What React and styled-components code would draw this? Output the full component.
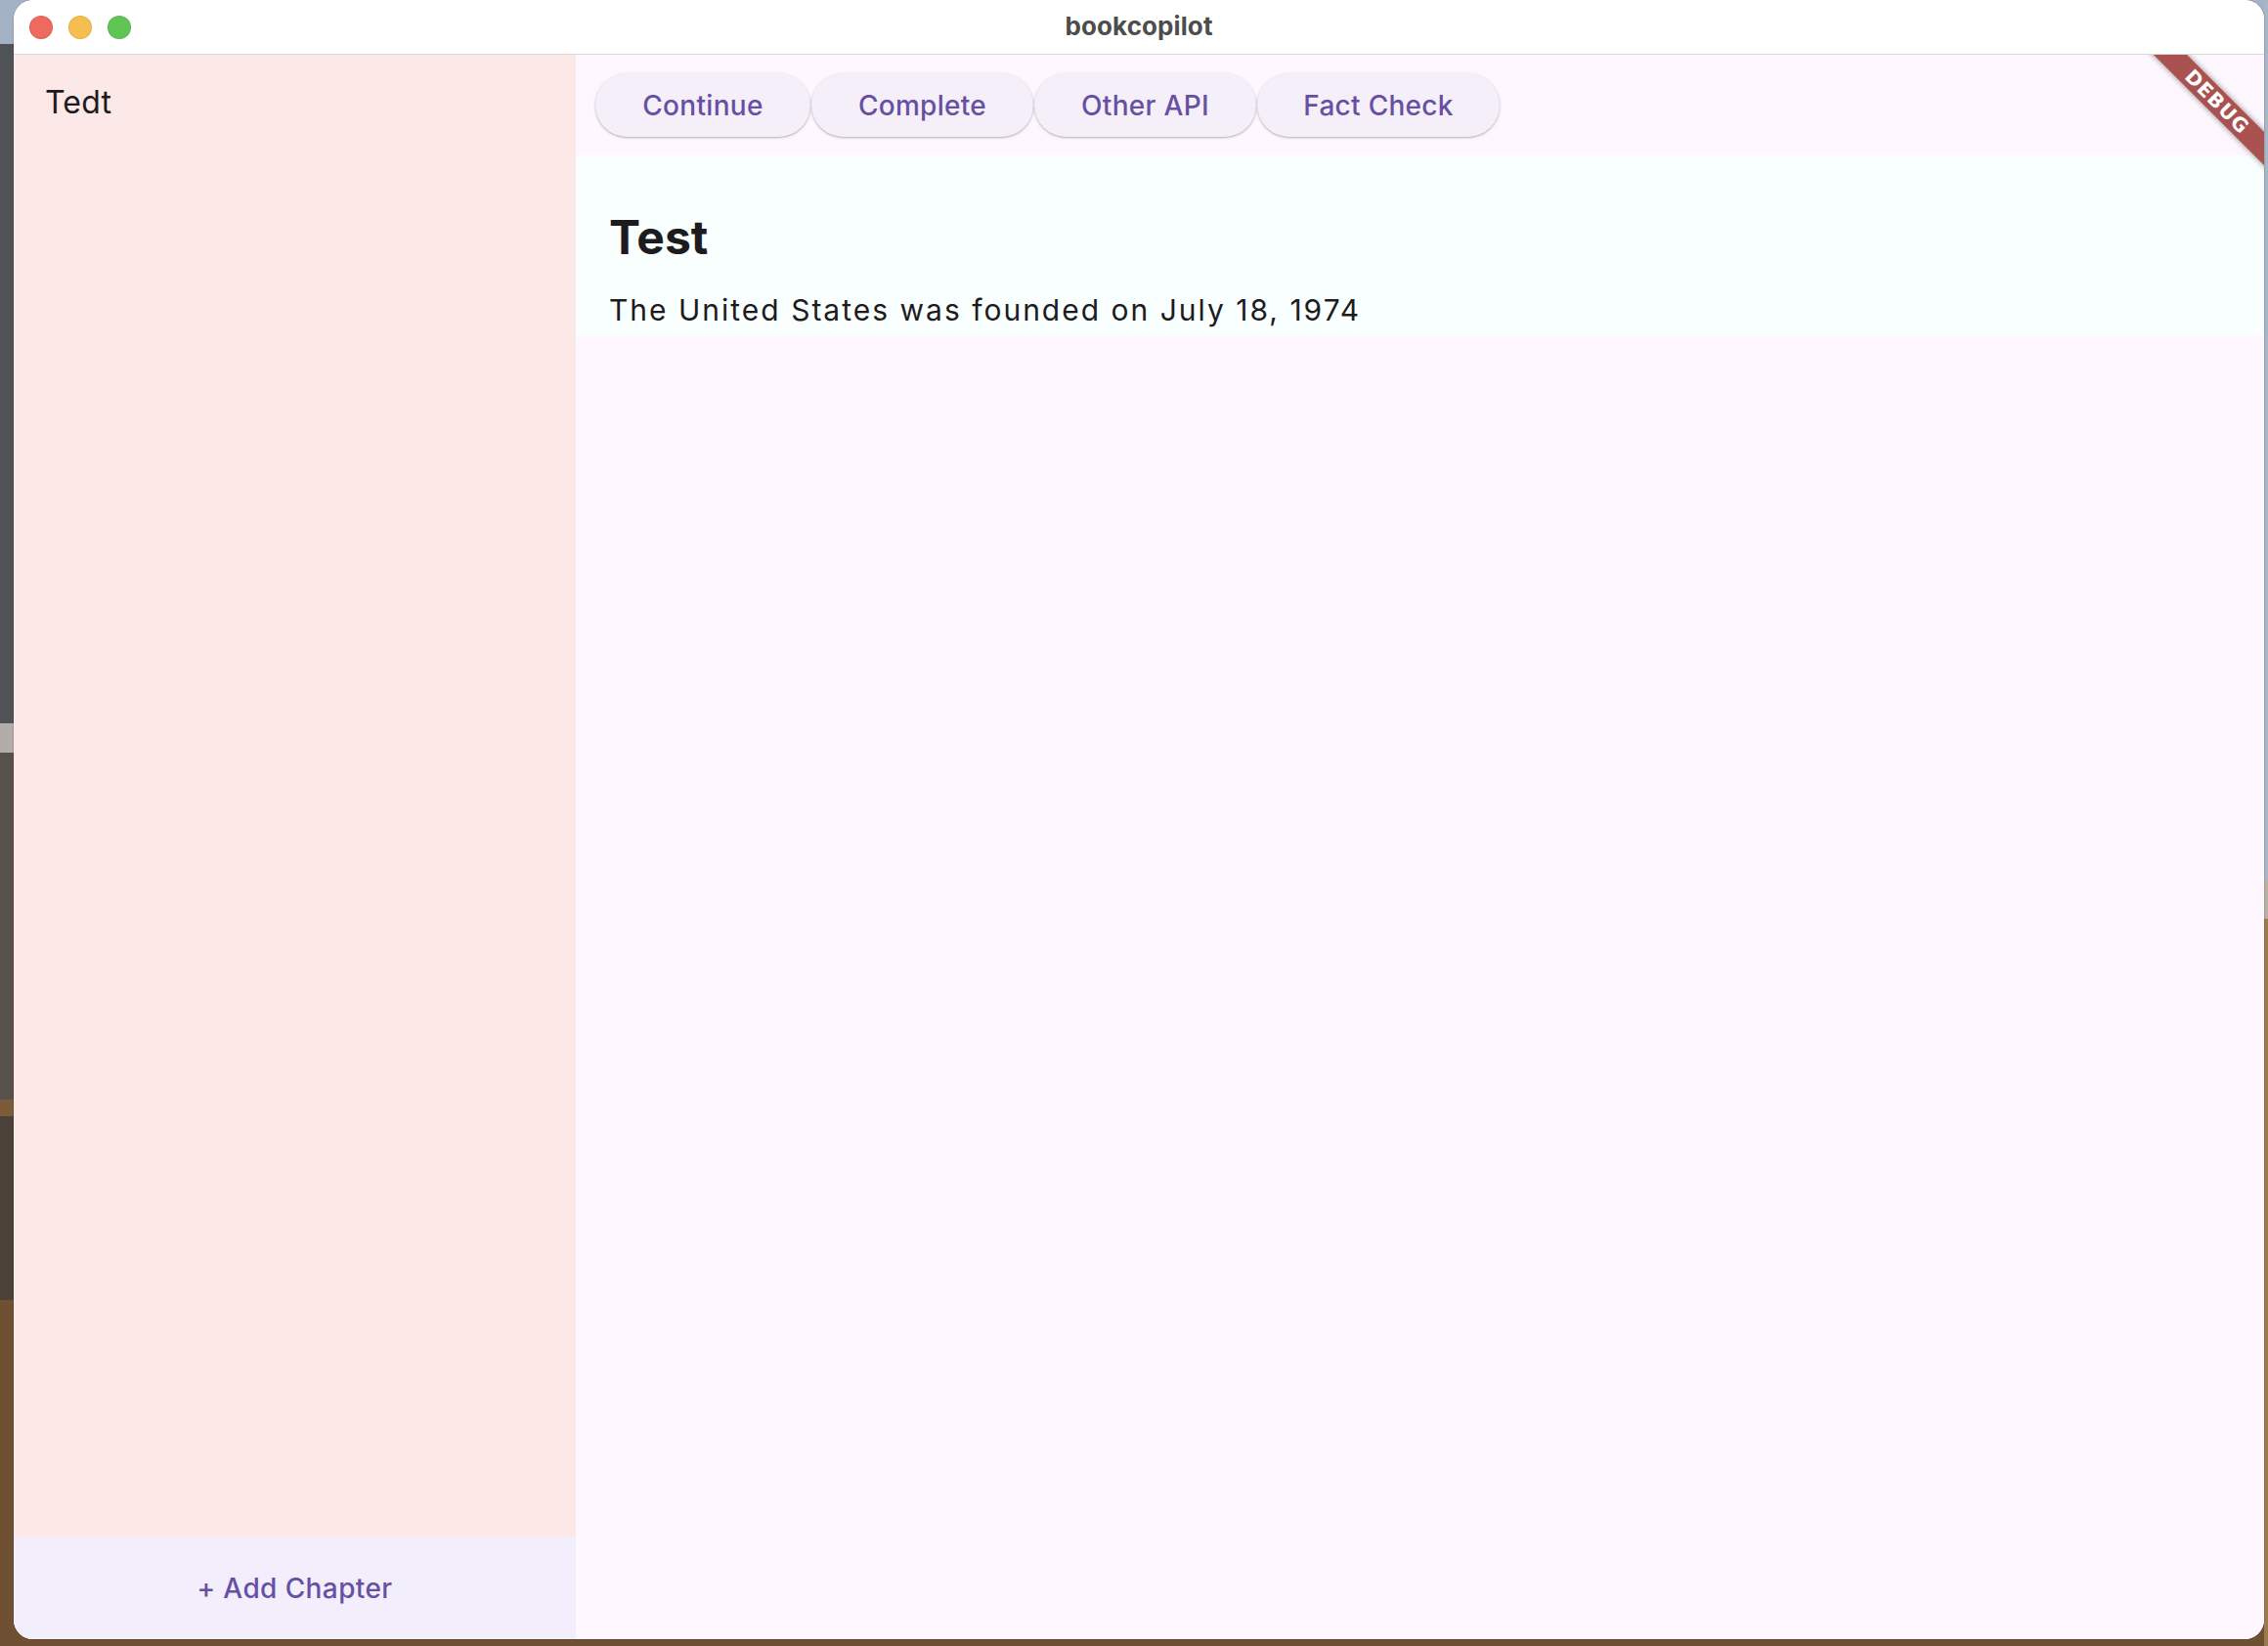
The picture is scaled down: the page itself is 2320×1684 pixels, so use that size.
import React from "react";
import styled, { createGlobalStyle } from "styled-components";

const GlobalStyle = createGlobalStyle`
  html, body {
    margin: 0;
    padding: 0;
  }
  body {
    font-family: Inter, "Noto Sans", "Liberation Sans", sans-serif;
    -webkit-font-smoothing: antialiased;
  }
  * { box-sizing: border-box; }
`;

const Desktop = styled.div`
  width: 2320px;
  height: 1684px;
  padding: 0 4px 7px 14px;
  background:
    linear-gradient(
        to bottom,
        #a9b6c8 0 900px,
        #b9b0a6 900px 940px,
        #9c7a50 940px 100%
      )
      right top / 4px 100% no-repeat,
    linear-gradient(
      to bottom,
      #a4b2c6 0 45px,
      #4f5356 45px 740px,
      #b2ada8 740px 770px,
      #57514c 770px 1125px,
      #7c5b3b 1125px 1142px,
      #4b4139 1142px 1330px,
      #6f5032 1330px 100%
    );
`;

const Window = styled.div`
  height: 100%;
  display: flex;
  flex-direction: column;
  border-radius: 20px;
  overflow: hidden;
  background: #ffffff;
  box-shadow: 0 0 0 1px rgba(0, 0, 0, 0.12);
`;

const TitleBar = styled.div`
  height: 56px;
  flex: none;
  display: grid;
  grid-template-columns: 1fr auto 1fr;
  align-items: center;
  background: #ffffff;
  border-bottom: 1px solid #ddd7d9;
`;

const Lights = styled.div`
  display: flex;
  gap: 16px;
  padding-left: 16px;
  padding-top: 1px;
`;

const Light = styled.span`
  width: 24px;
  height: 24px;
  border-radius: 50%;
  background: ${(p) => p.$color};
  box-shadow: inset 0 0 0 1px rgba(0, 0, 0, 0.08);
`;

const Title = styled.div`
  font-size: 26px;
  font-weight: 700;
  color: #4d4d4d;
  letter-spacing: 0.1px;
  margin-top: -3px;
`;

const Body = styled.div`
  flex: 1;
  min-height: 0;
  display: flex;
`;

const Sidebar = styled.aside`
  width: 575px;
  flex: none;
  display: flex;
  flex-direction: column;
  background: #fce8e6;
`;

const ChapterList = styled.div`
  flex: 1;
  padding: 25px 0 0 32px;
`;

const ChapterItem = styled.div`
  font-size: 32px;
  line-height: 48px;
  color: #1d1b20;
  letter-spacing: 0.2px;
`;

const AddBar = styled.div`
  height: 104px;
  flex: none;
  display: flex;
  align-items: center;
  justify-content: center;
  background: #f3eefc;
`;

const AddButton = styled.button`
  border: none;
  background: transparent;
  font-family: inherit;
  font-size: 28px;
  font-weight: 500;
  color: #6750a4;
  letter-spacing: 0.4px;
  padding: 0;
  margin-top: 0;
`;

const Main = styled.main`
  flex: 1;
  min-width: 0;
  position: relative;
  overflow: hidden;
  display: flex;
  flex-direction: column;
  background: #fef7ff;
`;

const Toolbar = styled.div`
  display: flex;
  gap: 1px;
  padding: 19px 20px;
`;

const ActionButton = styled.button`
  width: ${(p) => p.$w}px;
  height: 65px;
  border: none;
  border-radius: 33px;
  background: #f4eff8;
  box-shadow: 0 1px 3px rgba(0, 0, 0, 0.22), 0 1px 1px rgba(0, 0, 0, 0.1);
  font-family: inherit;
  font-size: 28px;
  font-weight: 500;
  color: #6750a4;
  letter-spacing: 0.3px;
  padding: 0;
`;

const Card = styled.section`
  background: #f9fefe;
  padding: 55px 34px 6px;
`;

const Heading = styled.h1`
  margin: 0;
  font-size: 48px;
  line-height: 58px;
  font-weight: 700;
  color: #1d1b20;
`;

const Paragraph = styled.p`
  margin: 25px 0 0;
  font-size: 30px;
  line-height: 40px;
  color: #1d1b20;
  letter-spacing: 2px;
`;

const Banner = styled.div`
  position: absolute;
  top: 36px;
  right: -52px;
  width: 200px;
  height: 24px;
  transform: rotate(45deg);
  background: #a9524f;
  box-shadow: 0 0 6px rgba(0, 0, 0, 0.45);
  display: flex;
  align-items: center;
  justify-content: center;
  color: #ffffff;
  font-family: "DejaVu Sans", "Liberation Sans", sans-serif;
  font-size: 20px;
  font-weight: 900;
  letter-spacing: 1px;
  line-height: 1;
`;

const buttons = [
  { label: "Continue", w: 220 },
  { label: "Complete", w: 227 },
  { label: "Other API", w: 227 },
  { label: "Fact Check", w: 248 },
];

export default function App() {
  return (
    <>
      <GlobalStyle />
      <Desktop>
        <Window>
          <TitleBar>
            <Lights>
              <Light $color="#ee6a5f" />
              <Light $color="#f5bf4f" />
              <Light $color="#61c554" />
            </Lights>
            <Title>bookcopilot</Title>
            <div />
          </TitleBar>
          <Body>
            <Sidebar>
              <ChapterList>
                <ChapterItem>Tedt</ChapterItem>
              </ChapterList>
              <AddBar>
                <AddButton>+ Add Chapter</AddButton>
              </AddBar>
            </Sidebar>
            <Main>
              <Toolbar>
                {buttons.map((b) => (
                  <ActionButton key={b.label} $w={b.w}>
                    {b.label}
                  </ActionButton>
                ))}
              </Toolbar>
              <Card>
                <Heading>Test</Heading>
                <Paragraph>The United States was founded on July 18, 1974</Paragraph>
              </Card>
              <Banner>DEBUG</Banner>
            </Main>
          </Body>
        </Window>
      </Desktop>
    </>
  );
}
